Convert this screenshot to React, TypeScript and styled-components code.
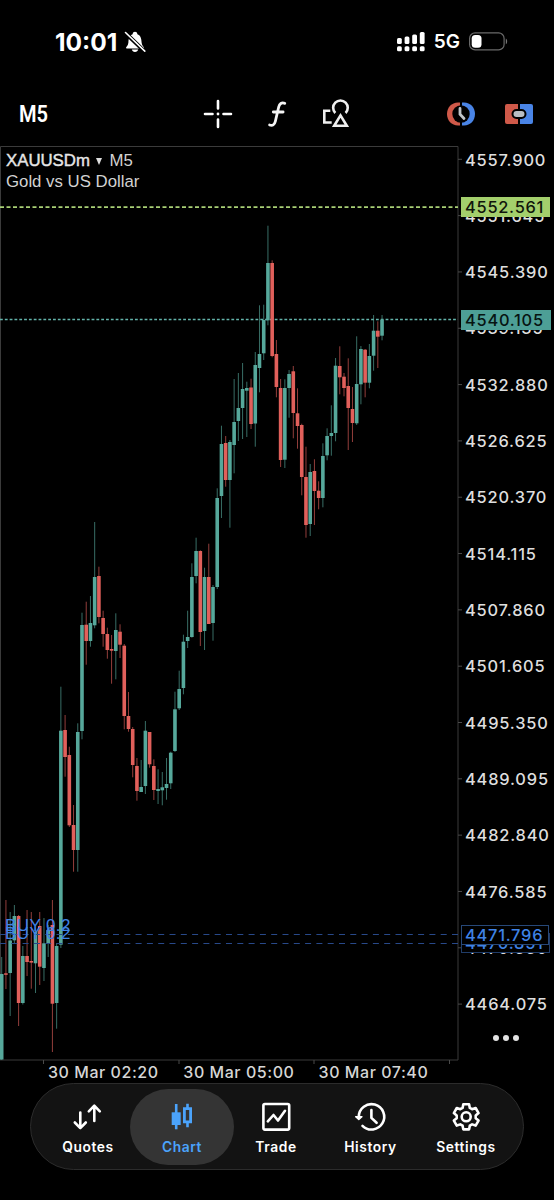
import React from "react";
import styled, { createGlobalStyle } from "styled-components";

const GREEN = "#56a89b";
const RED = "#e1605b";
const STEP = 4.226;
const TOP = 146;

type Candle = [up: 0 | 1, high: number, top: number, bottom: number, low: number];

const candles: Candle[] = [
  [1, 957, 974, 1059.5, 1060], [0, 900, 973.3, 974.8, 989], [1, 912, 940.5, 973, 1016], [1, 905, 916, 940.3, 943],
  [0, 915, 916, 1003, 1026], [1, 946, 956, 1003, 1004.5], [0, 910, 956, 962, 976], [0, 912, 961, 962.6, 988.7],
  [1, 928, 931.7, 963.3, 993], [0, 912, 926, 966.7, 985], [1, 918, 943.3, 968, 981], [1, 925, 930, 943.3, 957],
  [0, 900, 925, 1003.7, 1052], [1, 943, 946, 1003, 1028.7], [1, 686.7, 730.7, 944.7, 948], [0, 715, 730, 757, 776.7],
  [0, 746.7, 755, 825.3, 827], [0, 805, 825, 850, 871.7], [1, 723.3, 732, 850, 871.7], [1, 612.7, 625, 731, 739.3],
  [0, 601.7, 624.7, 641, 664.7], [1, 596, 623, 641, 646.7], [1, 522, 577, 625.3, 628.3], [0, 566.7, 576, 617, 623.3],
  [0, 610.7, 618, 634, 646.7], [0, 627.7, 634, 650, 658.7], [0, 635, 649, 650.7, 683.7], [1, 613.3, 630, 651, 679.3],
  [0, 624.3, 631.7, 644.7, 658], [0, 644, 645.7, 716, 729.3], [0, 692, 716, 729, 731.7], [0, 727, 729, 765, 777.3],
  [0, 758, 766, 791, 800.7], [1, 760, 787, 792, 792], [1, 721, 730.7, 786, 794], [0, 732, 732, 764.3, 767.7],
  [0, 759.3, 766, 790, 800], [1, 769.3, 789, 791, 804], [1, 772, 787.3, 790.3, 805.3], [1, 758, 784, 788, 799.7],
  [1, 751.7, 752.7, 783.3, 789], [1, 691.7, 709.3, 751, 752], [1, 670.7, 689, 708.3, 710], [1, 634.7, 641.7, 688, 694.3],
  [1, 610.7, 637, 641, 648], [1, 563.3, 577, 637, 637.7], [1, 537.7, 551, 576, 583.3], [0, 550.3, 551, 632, 646],
  [1, 567.7, 577, 631, 650], [0, 543.7, 577, 624, 624], [1, 585, 587, 623, 640.7], [1, 488.3, 498, 587, 589],
  [1, 425.7, 444, 496, 518], [0, 436, 443, 480, 486.7], [1, 440, 442, 480, 527.7], [1, 379, 422, 445, 473.3],
  [1, 373, 408, 421, 441], [1, 363, 389, 408, 439], [1, 381.7, 388, 390.7, 437], [0, 378.7, 387.5, 424, 429],
  [1, 352, 365, 423.5, 446.7], [1, 305.3, 354, 368, 392.3], [1, 304.7, 320, 353.3, 360], [1, 225.7, 263, 320.3, 325.3],
  [0, 260.3, 263, 356, 357.3], [0, 340, 354, 387, 397.3], [0, 379, 388, 460, 467], [1, 379.3, 388, 459.7, 468],
  [1, 370, 374, 388, 417.7], [0, 366, 371.3, 413, 438.3], [0, 388.3, 413.3, 426, 448.7], [0, 423.7, 425, 477, 495.3],
  [0, 446.7, 477, 525, 537.7], [1, 464, 472, 524, 536], [0, 459.3, 471, 491, 525], [0, 481.3, 490.7, 498, 509.3],
  [1, 443.3, 456, 498, 507.3], [1, 428.3, 436, 455.3, 460.3], [1, 405.3, 433, 436, 455.7], [1, 358, 365.7, 433, 441.3],
  [0, 346.3, 366, 377.3, 394.3], [0, 373, 376.7, 388, 396.3], [0, 358.3, 386, 408, 450], [0, 387, 409, 423, 442],
  [1, 336.3, 384, 423.3, 425], [1, 346, 349, 384.3, 404.3], [0, 349, 349.7, 382.7, 397.3], [1, 344, 356, 382.7, 388.3],
  [1, 315, 330.7, 355.7, 370.7], [0, 321.3, 330.7, 336.7, 368], [1, 315, 319.7, 335.7, 340.3],
];

const prices = Array.from({ length: 16 }, (_, i) => (4557.9 - 6.255 * i).toFixed(3));

const GlobalStyle = createGlobalStyle`
  * { box-sizing: border-box; }
  body { margin: 0; background: #000; color: #fff; font-family: Inter, "Liberation Sans", sans-serif; }
  svg { display: block; overflow: visible; }
`;

const Screen = styled.main`
  width: 554px;
  height: 1200px;
  display: flex;
  flex-direction: column;
  overflow: hidden;
  background: #000;
`;

const StatusBar = styled.header`
  height: 83px;
  padding: 0 46px 0 55px;
  display: flex;
  align-items: center;
  justify-content: space-between;
`;

const StatusGroup = styled.div<{ $gap: number }>`
  display: flex;
  align-items: center;
  gap: ${(p) => p.$gap}px;
`;

const Clock = styled.span`
  font-size: 24.5px;
  font-weight: 700;
  letter-spacing: 0;
  line-height: 30px;
`;

const Network = styled.span`
  font-size: 19px;
  font-weight: 600;
  line-height: 24px;
  letter-spacing: 0;
`;

const Toolbar = styled.nav`
  height: 63px;
  padding: 0 20px 2px 19px;
  display: grid;
  grid-template-columns: 184px 1fr 88px;
  align-items: center;
`;

const Timeframe = styled.span`
  font: 600 24.5px/30px Roboto, sans-serif;
  transform: scaleX(0.82);
  transform-origin: left;
`;

const Tools = styled.div<{ $gap: number }>`
  display: flex;
  align-items: center;
  gap: ${(p) => p.$gap}px;
`;

const ChartArea = styled.section`
  height: 938px;
  display: grid;
  grid-template-columns: 459px 95px;
  grid-template-rows: 914px 24px;
`;

const Plot = styled.div`
  position: relative;
`;

const PlotTitle = styled.div`
  position: absolute;
  left: 6px;
  top: 4px;
  color: #d2d2d2;
  font: 16.8px/21px "Liberation Sans", sans-serif;
`;

const SymbolLine = styled.div`
  display: flex;
  align-items: center;
`;

const SymbolName = styled.span`
  color: #e6e6e6;
  -webkit-text-stroke: 0.4px #e6e6e6;
`;

const Caret = styled.i`
  width: 0;
  height: 0;
  margin: 2px 7px 0 6.5px;
  border: 3.5px solid transparent;
  border-top: 7px solid #dedede;
  border-bottom: 0;
`;

const Order = styled.span<{ $y: number }>`
  position: absolute;
  left: 5px;
  top: ${(p) => p.$y - TOP - 10}px;
  color: #3f83e6;
  font: 17px/20px "Liberation Sans", sans-serif;
  letter-spacing: 0.4px;
`;

const PriceAxis = styled.div`
  position: relative;
  padding: 3.5px 0 0 6px;
  display: flex;
  flex-direction: column;
  gap: 36.32px;
`;

const Price = styled.span`
  height: 20px;
  font-size: 16.4px;
  font-weight: 500;
  line-height: 20px;
  letter-spacing: 0.82px;
  color: #dedede;
  white-space: nowrap;
`;

const PriceTag = styled.span<{ $y: number; $bg: string; $line?: string; $ink: string; $w: number }>`
  position: absolute;
  left: 2px;
  top: ${(p) => p.$y - TOP - 10}px;
  width: ${(p) => p.$w}px;
  height: 20px;
  padding-left: ${(p) => (p.$line ? 3 : 4)}px;
  border: ${(p) => (p.$line ? `1px solid ${p.$line}` : "0")};
  background: ${(p) => p.$bg};
  color: ${(p) => p.$ink};
  font-size: 16.4px;
  font-weight: 500;
  line-height: ${(p) => (p.$line ? 18 : 20)}px;
  letter-spacing: 0.75px;
`;

const More = styled.div`
  position: absolute;
  left: 34px;
  top: 889px;
  display: flex;
  gap: 4px;
`;

const Dot = styled.i`
  width: 6px;
  height: 6px;
  border-radius: 50%;
  background: #e4e4e4;
`;

const TimeAxis = styled.div`
  grid-column: 1 / -1;
  padding: 2px 0 0 48px;
  display: flex;
`;

const Time = styled.span`
  width: 135.3px;
  font-size: 16px;
  font-weight: 500;
  line-height: 20px;
  letter-spacing: 0.55px;
  color: #d6d6d6;
  white-space: nowrap;
`;

const TabBar = styled.nav`
  width: 494px;
  height: 87px;
  margin: -1px 0 0 30px;
  padding: 5px 4px 4px 15px;
  display: grid;
  grid-template-columns: 84px 104px 84px 105px 86px;
  border: 1px solid #2c2c2c;
  border-radius: 44px;
  background: #131313;
`;

const Tab = styled.div<{ $active?: boolean }>`
  height: 76px;
  padding-top: 13px;
  display: flex;
  flex-direction: column;
  align-items: center;
  gap: 5px;
  border-radius: 38px;
  background: ${(p) => (p.$active ? "#343434" : "transparent")};
  color: ${(p) => (p.$active ? "#4ba3fb" : "#fff")};
`;

const TabLabel = styled.span`
  font-size: 13.8px;
  font-weight: 600;
  line-height: 20px;
  letter-spacing: 0.6px;
`;

const BellOff = () => (
  <svg width="22" height="22" viewBox="0 0 22 22">
    <path fill="#fff" d="M2 16.8c0-1 2.3-2.1 2.4-5.2C4.5 6.8 5.8 4.200 8.600 3.200 8.900 1.500 9.700.8 11 .8s2.100.7 2.400 2.400c2.800 1 4.100 3.600 4.200 8.400.1 3.100 2.400 4.200 2.400 5.200 0 .5-.3.700-.8.700H2.800c-.5 0-.8-.2-.8-.7ZM7.800 18.600h6.400c-.4 1.500-1.500 2.300-3.200 2.300s-2.800-.8-3.200-2.300Z" />
    <path d="m1.500 2 19.300 18.600" stroke="#000" strokeWidth="4" />
    <path d="m1.500 1.500 19.300 18.600" stroke="#fff" strokeWidth="1.600" strokeLinecap="round" />
  </svg>
);

const Signal = () => (
  <svg width="28" height="20" viewBox="0 0 28 20" fill="#fff">
    {[6, 4.5, 2.5, 0].map((y, i) => (
      <g key={y}>
        <rect x={i * 7.6} y={y} width="4.800" height={12 - y} rx="1.500" />
        <rect x={i * 7.6} y="14.200" width="4.800" height="5" rx="1.500" />
      </g>
    ))}
  </svg>
);

const Battery = () => (
  <svg width="39" height="19" viewBox="0 0 39 19">
    <rect x=".6" y=".9" width="34.500" height="17" rx="5.500" fill="none" stroke="#6a6a6a" strokeWidth="1.200" />
    <rect x="2.700" y="3" width="9.800" height="12.800" rx="3.500" fill="#fff" />
    <path d="M36.800 6.500c1.800.8 1.800 5 0 5.800Z" fill="#777" />
  </svg>
);

const Crosshair = () => (
  <svg width="30" height="30" viewBox="0 0 30 30" stroke="#fff" strokeWidth="2.600" strokeLinecap="round">
    <path d="M15 2v7.500M15 20.500V28M2 15h7.500M20.500 15H28" />
    <circle cx="15" cy="15" r="1.400" fill="#fff" stroke="none" />
  </svg>
);

const FunctionIcon = () => (
  <svg width="22" height="28" viewBox="0 0 22 28" fill="none" stroke="#f4f4f4" strokeWidth="2.800" strokeLinecap="round">
    <path d="M17.800 3.300c-3.300-1-5.300.3-6.100 3.700L8.300 21.500c-.8 3.400-2.800 4.500-5.700 3.500M6.300 12h9.800" />
  </svg>
);

const Shapes = () => (
  <svg width="28" height="30" viewBox="0 0 28 30" fill="none" stroke="#eee" strokeWidth="2.600">
    <path d="M12.300 14A7.300 7.300 0 1 1 22.600 14" />
    <path d="M7.300 11.800h-6v11.700h7.400" />
    <path d="m17.500 16.400-6.300 10.300h12.600Z" />
  </svg>
);

const SplitClock = () => (
  <svg width="30" height="26" viewBox="0 0 30 26">
    <path d="M14 1.500v23h-2C5.500 24.500 1 19.500 1 13S5.500 1.500 12 1.500Z" fill="#cf5949" />
    <path d="M16 1.500v23h2c6.500 0 11-5 11-11.500S24.500 1.500 18 1.500Z" fill="#4984e6" />
    <circle cx="15" cy="13" r="8.700" fill="#000" />
    <path d="M14 7.500v5.700l4 4.300" fill="none" stroke="#bfc4c8" strokeWidth="2.800" strokeLinecap="round" />
  </svg>
);

const SplitTrade = () => (
  <svg width="30" height="22" viewBox="0 0 30 22">
    <path d="M14 1v20H3q-2 0-2-2V3q0-2 2-2Z" fill="#cf5949" />
    <path d="M16 1v20h11q2 0 2-2V3q0-2-2-2Z" fill="#4984e6" />
    <rect x="8.500" y="7" width="13" height="8" rx="4" fill="#b9bec3" stroke="#000" strokeWidth="2" />
  </svg>
);

const iconProps = { width: 30, height: 30, viewBox: "0 0 30 30", fill: "none", stroke: "currentColor", strokeWidth: 2.6, strokeLinecap: "round", strokeLinejoin: "round" } as const;

const QuotesIcon = () => (
  <svg {...iconProps}><path d="M7.300 10.500V26M1.800 20.500l5.500 5.600 5.500-5.600M21.300 19V4M15.800 9.300l5.500-5.600 5.500 5.600" /></svg>
);

const ChartIcon = () => (
  <svg {...iconProps}>
    <path d="M9.200 2v25.300" strokeLinecap="butt" />
    <rect x="4.700" y="10.300" width="9" height="12.700" fill="currentColor" stroke="none" />
    <path d="M20.500 1.700V6M20.500 20v5.200" strokeLinecap="butt" />
    <path d="M17.400 6.600h6.200v13.200h-6.200Z" strokeLinejoin="miter" strokeWidth="2.800" />
  </svg>
);

const TradeIcon = () => (
  <svg {...iconProps}><rect x="2.400" y="2" width="25.800" height="25.600" rx="1.500" /><path d="m6.800 19.300 5.700-6.300 4.500 5.500 7-9.700" /></svg>
);

const HistoryIcon = () => (
  <svg {...iconProps}>
    <path d="M2.800 14.800A12.700 12.700 0 1 1 6.500 23.800" />
    <path d="M15.400 8v7.900l5.200 4.900" />
    <path d="M-.3 14.700h6.200L2.800 17.500Z" fill="currentColor" strokeWidth="1.500" />
  </svg>
);

const gear = Array.from({ length: 6 }, (_, i) => {
  const points: [number, number][] = [[-22, 9.6], [-13, 12.9], [13, 12.9], [22, 9.6]];
  return points
    .map(([angle, radius]) => {
      const a = ((i * 60 + angle - 90) * Math.PI) / 180;
      return `${(15.2 + radius * Math.cos(a)).toFixed(2)},${(14.8 + radius * Math.sin(a)).toFixed(2)}`;
    })
    .join(" ");
}).join(" ");

const SettingsIcon = () => (
  <svg {...iconProps}><polygon points={gear} /><circle cx="15.200" cy="14.800" r="4.500" /></svg>
);

const CandleChart = () => (
  <svg width="459" height="920" viewBox="0 146 459 920">
    <path d="M.5 1060V146.500H458V1060H0" fill="none" stroke="#3b3b3b" />
    <path
      d={prices.map((_, i) => `M458 ${159.3 + i * 56.32}h4`).join("") + "M43.500 1060v4M179 1060v4M314 1060v4M449.500 1060v4"}
      stroke="#4a4a4a"
    />
    <path d="M0 207.200H458" stroke="#a9d075" strokeWidth="1.800" strokeDasharray="4 2.500" />
    <path d="M0 319.600H458" stroke="#63b3aa" strokeWidth="1.500" strokeDasharray="2.800 2.020" />
    {candles.map(([up, high, top, bottom, low], i) => {
      const x = 1.7 + i * STEP;
      const color = up ? GREEN : RED;
      return (
        <g key={i} fill={color}>
          <rect x={x - 0.5} y={high} width="1" height={low - high} opacity="0.65" />
          <rect x={x - 1.8} y={top} width="3.600" height={bottom - top} />
        </g>
      );
    })}
    <path d="M0 934.500H458M0 943.500H458" stroke="#28498a" strokeWidth="1" strokeDasharray="6 5.300" />
  </svg>
);

const tabs = [
  { label: "Quotes", icon: <QuotesIcon /> },
  { label: "Chart", icon: <ChartIcon />, active: true },
  { label: "Trade", icon: <TradeIcon /> },
  { label: "History", icon: <HistoryIcon /> },
  { label: "Settings", icon: <SettingsIcon /> },
];

export default function App() {
  return (
    <Screen>
      <GlobalStyle />
      <StatusBar>
        <StatusGroup $gap={7}>
          <Clock>10:01</Clock>
          <BellOff />
        </StatusGroup>
        <StatusGroup $gap={9}>
          <Signal />
          <Network>5G</Network>
          <Battery />
        </StatusGroup>
      </StatusBar>
      <Toolbar>
        <Timeframe>M5</Timeframe>
        <Tools $gap={34}>
          <Crosshair />
          <FunctionIcon />
          <Shapes />
        </Tools>
        <Tools $gap={28}>
          <SplitClock />
          <SplitTrade />
        </Tools>
      </Toolbar>
      <ChartArea>
        <Plot>
          <CandleChart />
          <PlotTitle>
            <SymbolLine>
              <SymbolName>XAUUSDm</SymbolName>
              <Caret />
              M5
            </SymbolLine>
            Gold vs US Dollar
          </PlotTitle>
          <Order $y={925.5}>BUY 0.2</Order>
          <Order $y={934}>BUY 0.2</Order>
        </Plot>
        <PriceAxis>
          {prices.map((price) => (
            <Price key={price}>{price}</Price>
          ))}
          <PriceTag $y={207} $bg="#a3cf6c" $ink="#10150b" $w={89}>4552.561</PriceTag>
          <PriceTag $y={320} $bg="#4d9f96" $ink="#071412" $w={90}>4540.105</PriceTag>
          <PriceTag $y={943} $bg="#000" $line="#203c68" $ink="#3f83e6" $w={89}>4470.851</PriceTag>
          <PriceTag $y={935} $bg="#000" $line="#274878" $ink="#3f83e6" $w={88}>4471.796</PriceTag>
          <More><Dot /><Dot /><Dot /></More>
        </PriceAxis>
        <TimeAxis>
          <Time>30 Mar 02:20</Time>
          <Time>30 Mar 05:00</Time>
          <Time>30 Mar 07:40</Time>
        </TimeAxis>
      </ChartArea>
      <TabBar>
        {tabs.map((tab) => (
          <Tab key={tab.label} $active={tab.active}>
            {tab.icon}
            <TabLabel>{tab.label}</TabLabel>
          </Tab>
        ))}
      </TabBar>
    </Screen>
  );
}
